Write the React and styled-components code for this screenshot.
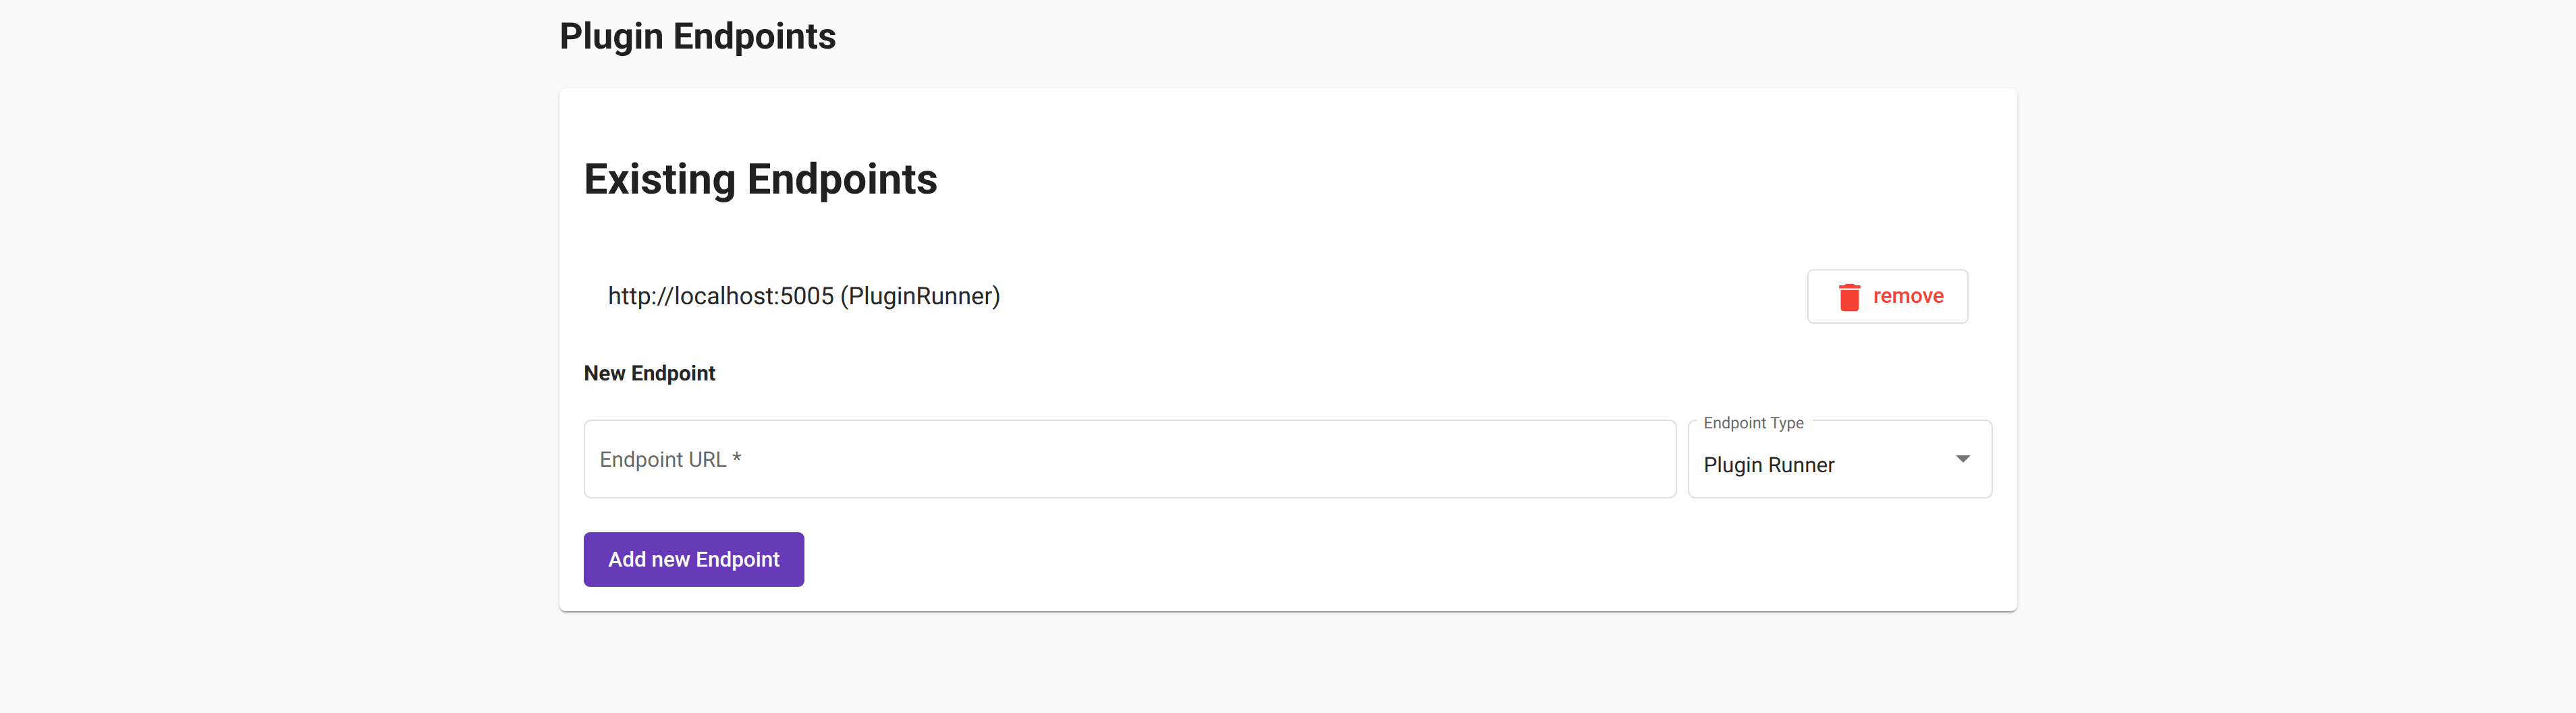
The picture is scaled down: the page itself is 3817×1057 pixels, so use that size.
import React from "react";
import styled, { createGlobalStyle } from "styled-components";

const GlobalStyle = createGlobalStyle`
  *, *::before, *::after { box-sizing: border-box; }
  html, body { margin: 0; min-height: 100vh; background: #fafafa; }
  body {
    font-family: Roboto, "Liberation Sans", sans-serif;
    font-size: 31.5px;
    color: rgba(0, 0, 0, 0.87);
    text-rendering: geometricPrecision;
  }
`;

const Shell = styled.div`
  padding-left: 1px;
`;

const Page = styled.main`
  display: flow-root;
  width: 2160px;
  margin: 0 auto;
`;

const Title = styled.h1`
  margin: 18.5px 0 40.5px;
  font-size: 54px;
  line-height: 72px;
  font-weight: 700;
`;

const Card = styled.section`
  display: flex;
  flex-direction: column;
  align-items: stretch;
  height: 775px;
  padding: 36px;
  border-radius: 9px;
  background: #fff;
  box-shadow:
    0 4px 2px -2px rgba(0, 0, 0, 0.2),
    0 2px 2px 0 rgba(0, 0, 0, 0.14),
    0 2px 6px 0 rgba(0, 0, 0, 0.12);
`;

const Heading = styled.h2`
  margin: 63px 0 95px;
  font-size: 63px;
  line-height: 74px;
  font-weight: 700;
  letter-spacing: 0.05px;
`;

const EndpointRow = styled.div`
  display: flex;
  align-items: center;
  justify-content: space-between;
  height: 81px;
  padding: 0 36px;
`;

const EndpointName = styled.span`
  font-size: 36px;
  line-height: 54px;
  padding-bottom: 2px;
`;

const Button = styled.button`
  display: inline-flex;
  align-items: center;
  height: 81px;
  padding: 0 ${(p) => (p.$stroked ? "34px" : "36.25px")};
  border: ${(p) => (p.$stroked ? "2px solid rgba(0, 0, 0, 0.12)" : "0")};
  border-radius: 9px;
  background: ${(p) => (p.$stroked ? "transparent" : "#673ab7")};
  color: ${(p) => (p.$stroked ? "#f44336" : "#fff")};
  font: 500 31.5px/36px Roboto, "Liberation Sans", sans-serif;
  white-space: nowrap;
`;

const ButtonLabel = styled.span`
  padding-bottom: 2px;
`;

const TrashIcon = styled.svg`
  width: 54px;
  height: 54px;
  margin: 3px 8px 0 0;
  fill: currentColor;
`;

const SubHeading = styled.h3`
  margin: 56px 0 50px;
  font-size: 31.5px;
  line-height: 36px;
  font-weight: 700;
`;

const Fields = styled.div`
  display: flex;
  gap: 15.75px;
  height: 117px;
  margin-bottom: 50px;
`;

const Field = styled.fieldset`
  display: flex;
  align-items: center;
  justify-content: space-between;
  position: relative;
  min-width: 0;
  height: 117px;
  margin: 0;
  padding: 0 31.5px 0 21.5px;
  border: 2px solid rgba(0, 0, 0, 0.12);
  border-radius: 11.25px;
  flex: ${(p) => (p.$width ? `0 0 ${p.$width}px` : "1 1 0")};
`;

const Placeholder = styled.span`
  line-height: 36px;
  padding-top: 2px;
  color: rgba(0, 0, 0, 0.6);
`;

const Notch = styled.span`
  position: absolute;
  left: 12px;
  top: -11px;
  width: 171px;
  padding-left: 9.5px;
  background: #fff;
  font-size: 23.63px;
  line-height: 28px;
  color: rgba(0, 0, 0, 0.6);
  white-space: nowrap;
`;

const Value = styled.span`
  line-height: 36px;
  padding-top: 18px;
`;

const Arrow = styled.span`
  border: 11px solid transparent;
  border-top-color: rgba(0, 0, 0, 0.54);
  border-bottom-width: 0;
`;

const Actions = styled.div`
  display: flex;
`;

export default function App() {
  return (
    <Shell>
      <GlobalStyle />
      <Page>
        <Title>Plugin Endpoints</Title>
        <Card>
          <Heading>Existing Endpoints</Heading>
          <EndpointRow>
            <EndpointName>http://localhost:5005 (PluginRunner)</EndpointName>
            <Button $stroked>
              <TrashIcon viewBox="0 0 24 24" aria-hidden="true">
                <path d="M6 19c0 1.1.9 2 2 2h8c1.1 0 2-.9 2-2V7H6v12zM19 4h-3.500l-1-1h-5l-1 1H5v2h14V4z" />
              </TrashIcon>
              <ButtonLabel>remove</ButtonLabel>
            </Button>
          </EndpointRow>
          <SubHeading>New Endpoint</SubHeading>
          <Fields>
            <Field>
              <Placeholder>Endpoint URL *</Placeholder>
            </Field>
            <Field $width={452}>
              <Notch>Endpoint Type</Notch>
              <Value>Plugin Runner</Value>
              <Arrow />
            </Field>
          </Fields>
          <Actions>
            <Button>Add new Endpoint</Button>
          </Actions>
        </Card>
      </Page>
    </Shell>
  );
}
